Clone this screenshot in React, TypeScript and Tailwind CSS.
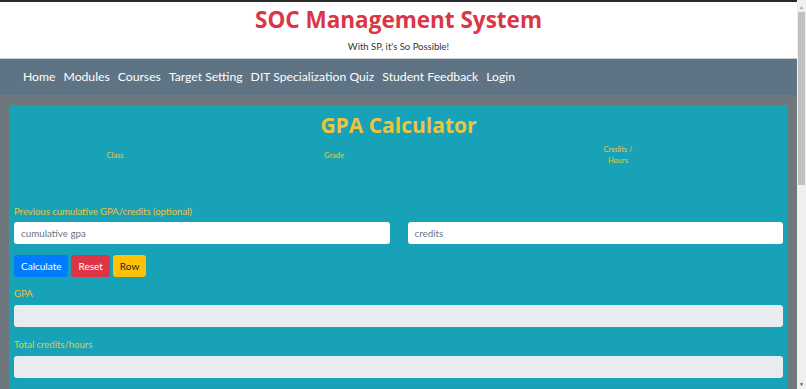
const navItems = [
  "Home",
  "Modules",
  "Courses",
  "Target Setting",
  "DIT Specialization Quiz",
  "Student Feedback",
  "Login",
];

export default function App() {
  return (
    <div className="flex h-[389px] w-[806px] overflow-hidden bg-[#f0f0f0] font-['Lato',sans-serif]">
      <div className="flex w-[797px] flex-col">
        {/* browser top edge */}
        <div className="h-[2px] bg-[#2b2b2b]" />

        {/* Header */}
        <header className="flex h-[56px] flex-col items-center bg-white pt-[3px]">
          <h1 className="font-['Open_Sans',sans-serif] text-[22.5px] leading-[30px] font-bold text-[#dc3545]">
            SOC Management System
          </h1>
          <p className="mt-[5px] text-[9.5px] leading-[14px] text-[#333]">
            With SP, it's So Possible!
          </p>
        </header>

        {/* Navbar */}
        <nav className="flex h-[37px] items-center gap-[8px] border-t border-[#c9cfd4] bg-[#5e7384] pl-[23px]">
          {navItems.map((item) => (
            <a key={item} className="text-[12.2px] text-white">
              {item}
            </a>
          ))}
        </nav>

        {/* Main area */}
        <main className="flex-1 bg-[#6f777e] px-[9px] pt-[10px]">
          <div className="h-full bg-[#17a2b8] px-[5px] pt-[5px]">
            <h2 className="text-center font-['Open_Sans',sans-serif] text-[21px] leading-[30px] font-bold text-[#ecc43e]">
              GPA Calculator
            </h2>

            <div className="mt-[4px] grid grid-cols-[202px_236px_332px] text-center text-[7.5px] leading-[11px] text-[#ecc43e]">
              <div className="pt-[6px]">Class</div>
              <div className="pt-[6px]">Grade</div>
              <div>
                Credits /<br />
                Hours
              </div>
            </div>

            <p className="mt-[39px] text-[9.5px] leading-[14px] text-[#ecc43e]">
              Previous cumulative GPA/credits (optional)
            </p>

            <div className="mt-[3px] flex gap-[18px]">
              <input
                placeholder="cumulative gpa"
                className="h-[22px] flex-1 rounded-[3px] bg-white px-[7px] text-[9.8px] text-[#495057] placeholder:text-[#6c757d] outline-none"
              />
              <input
                placeholder="credits"
                className="h-[22px] flex-1 rounded-[3px] bg-white px-[7px] text-[9.8px] text-[#495057] placeholder:text-[#6c757d] outline-none"
              />
            </div>

            <div className="mt-[11px] flex gap-[3px]">
              <button className="h-[22px] rounded-[3px] bg-[#007bff] px-[7px] text-[10px] text-white">
                Calculate
              </button>
              <button className="h-[22px] rounded-[3px] bg-[#dc3545] px-[7px] text-[10px] text-white">
                Reset
              </button>
              <button className="h-[22px] rounded-[3px] bg-[#ffc107] px-[7px] text-[10px] text-[#212529]">
                Row
              </button>
            </div>

            <p className="mt-[10px] text-[9.5px] leading-[14px] text-[#ecc43e]">GPA</p>
            <div className="mt-[4px] h-[22px] rounded-[3px] bg-[#e9ecef]" />

            <p className="mt-[11px] text-[9.5px] leading-[14px] text-[#ecc43e]">
              Total credits/hours
            </p>
            <div className="mt-[4px] h-[22px] rounded-[3px] bg-[#e9ecef]" />
          </div>
        </main>
      </div>

      {/* scrollbar */}
      <div className="flex w-[9px] flex-col pt-[2px]">
        <div className="flex h-[10px] items-center justify-center text-[5px] leading-none text-[#a0a0a0]">
          ▲
        </div>
        <div className="mx-[1px] h-[173px] bg-[#c1c1c1]" />
        <div className="flex-1" />
        <div className="flex h-[10px] items-center justify-center text-[5px] leading-none text-[#505050]">
          ▼
        </div>
      </div>
    </div>
  );
}
